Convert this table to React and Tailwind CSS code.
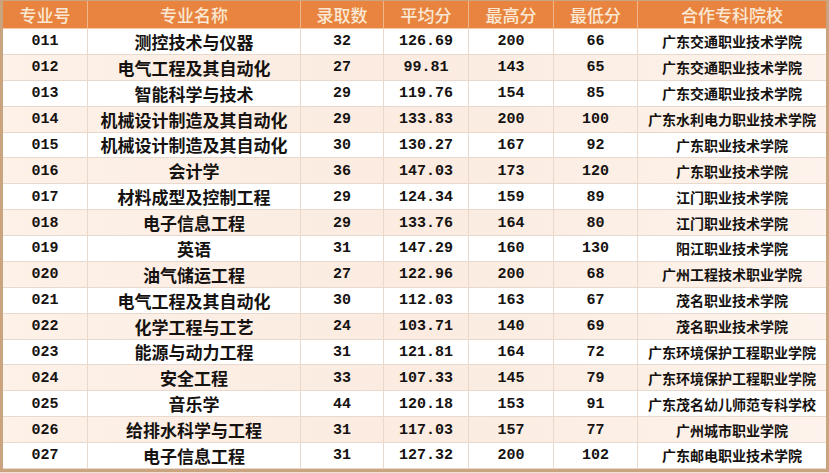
const rows = [
  ["011", "测控技术与仪器", "32", "126.69", "200", "66", "广东交通职业技术学院"],
  ["012", "电气工程及其自动化", "27", "99.81", "143", "65", "广东交通职业技术学院"],
  ["013", "智能科学与技术", "29", "119.76", "154", "85", "广东交通职业技术学院"],
  ["014", "机械设计制造及其自动化", "29", "133.83", "200", "100", "广东水利电力职业技术学院"],
  ["015", "机械设计制造及其自动化", "30", "130.27", "167", "92", "广东职业技术学院"],
  ["016", "会计学", "36", "147.03", "173", "120", "广东职业技术学院"],
  ["017", "材料成型及控制工程", "29", "124.34", "159", "89", "江门职业技术学院"],
  ["018", "电子信息工程", "29", "133.76", "164", "80", "江门职业技术学院"],
  ["019", "英语", "31", "147.29", "160", "130", "阳江职业技术学院"],
  ["020", "油气储运工程", "27", "122.96", "200", "68", "广州工程技术职业学院"],
  ["021", "电气工程及其自动化", "30", "112.03", "163", "67", "茂名职业技术学院"],
  ["022", "化学工程与工艺", "24", "103.71", "140", "69", "茂名职业技术学院"],
  ["023", "能源与动力工程", "31", "121.81", "164", "72", "广东环境保护工程职业学院"],
  ["024", "安全工程", "33", "107.33", "145", "79", "广东环境保护工程职业学院"],
  ["025", "音乐学", "44", "120.18", "153", "91", "广东茂名幼儿师范专科学校"],
  ["026", "给排水科学与工程", "31", "117.03", "157", "77", "广州城市职业学院"],
  ["027", "电子信息工程", "31", "127.32", "200", "102", "广东邮电职业技术学院"],
];

const headers = ["专业号", "专业名称", "录取数", "平均分", "最高分", "最低分", "合作专科院校"];

const cols = "grid grid-cols-[85px_213px_83px_85px_85px_84px_188px]";
const cjk = "font-['Noto_Sans_CJK_SC',sans-serif]";
const mono = "font-['Liberation_Mono','DejaVu_Sans_Mono',monospace]";

export default function App() {
  return (
    <div className="w-[829px] h-[473px] bg-[#efe3d6] overflow-hidden">
      <div className="w-[829px] h-[472px] border-x-[3px] border-b-[3px] border-t border-[#c9a47f] bg-white">
        <div className={`${cols} h-[28px] bg-[#e8843f] border-b border-[#f3c9a6]`}>
          {headers.map((h, i) => (
            <div
              key={h}
              className={`flex items-center justify-center text-[17px] font-medium text-[#fbe8d4] ${cjk} ${
                i < 6 ? "border-r border-[#f0b68c]" : ""
              }`}
            >
              {h}
            </div>
          ))}
        </div>
        {rows.map((r, idx) => (
          <div
            key={r[0]}
            className={`${cols} h-[25.88px] border-b border-[#e8d9cc] text-[#151210] ${
              idx % 2 === 1 ? "bg-gradient-to-r from-[#fdf1e8] via-[#fbebe0] to-[#fdf3ec]" : "bg-white"
            }`}
          >
            {r.map((c, i) => {
              const isText = i === 1 || i === 6;
              return (
                <div
                  key={i}
                  className={`flex items-center justify-center leading-none ${
                    i < 6 ? "border-r border-[#e8d9cc]" : ""
                  } ${
                    i === 1
                      ? `${cjk} text-[17px] font-bold`
                      : i === 6
                      ? `${cjk} text-[14px] font-bold`
                      : `${mono} text-[15px] font-bold`
                  } ${isText ? "" : "pt-[1px]"}`}
                >
                  {c}
                </div>
              );
            })}
          </div>
        ))}
      </div>
    </div>
  );
}
